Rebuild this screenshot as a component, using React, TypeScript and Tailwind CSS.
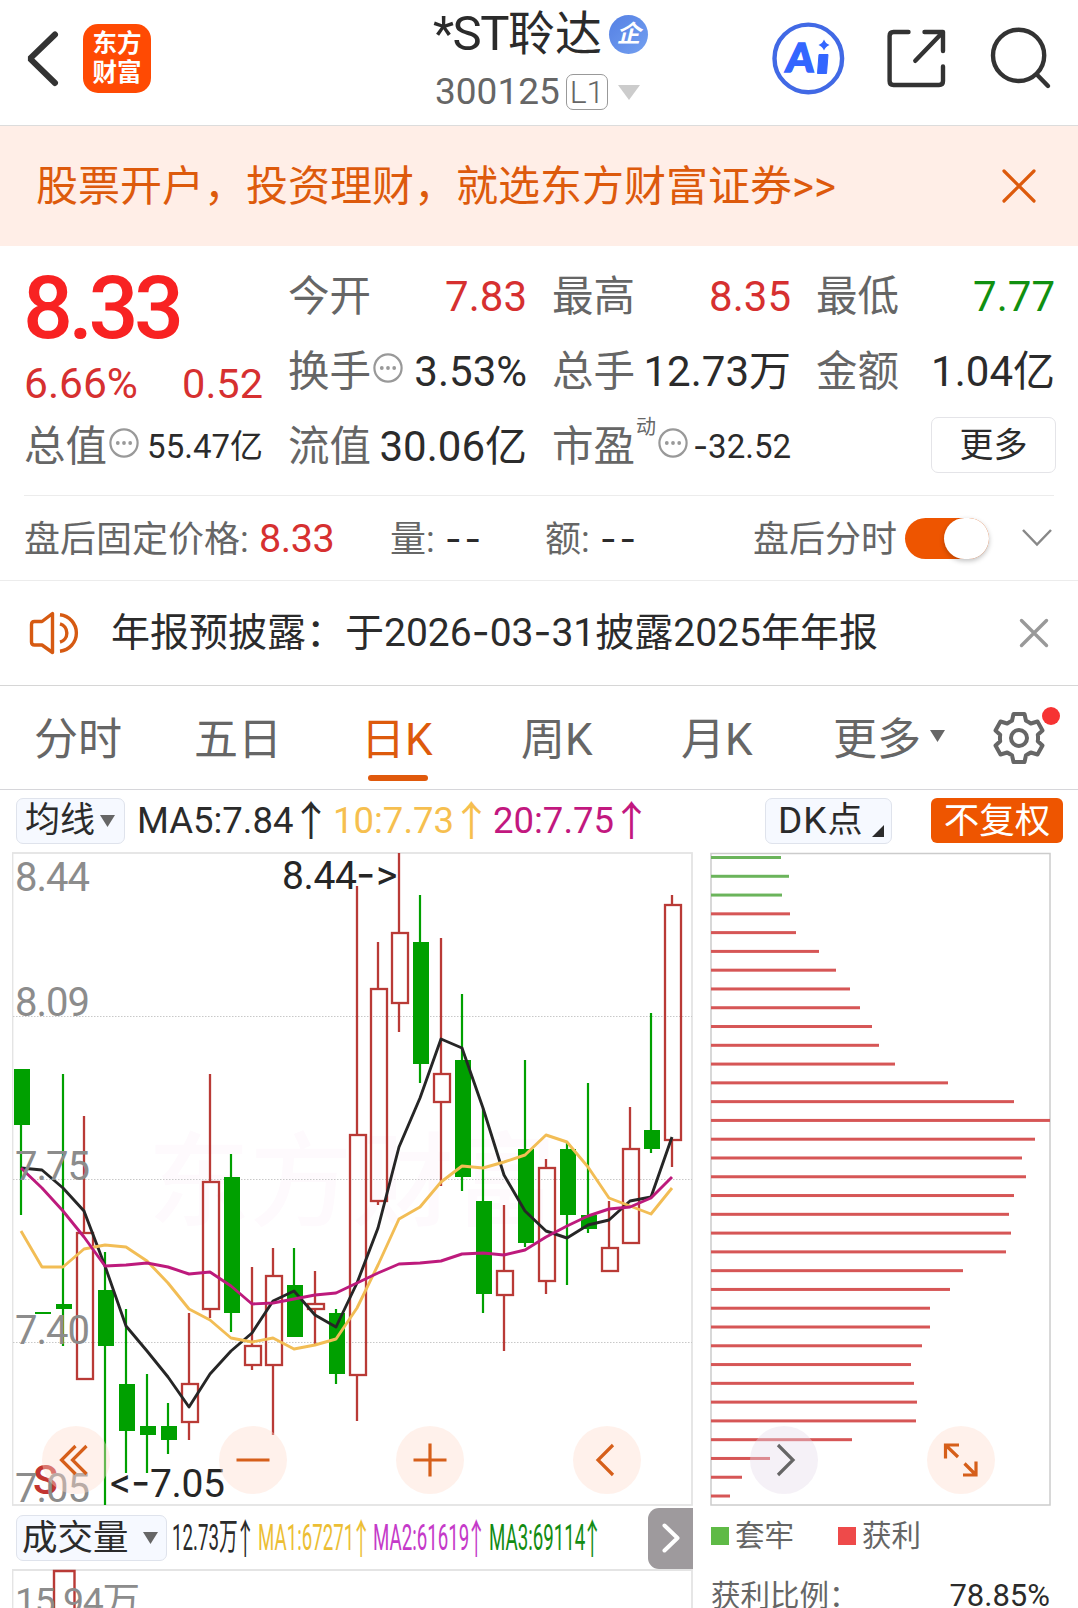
import React from 'react';
import clsx from 'clsx';

type Candle = {
  up: boolean;
  high: number;
  low: number;
  top: number;
  bottom: number;
};

const c = (up: boolean, high: number, top: number, bottom: number, low: number): Candle => ({ up, high, top, bottom, low });

// Daily candles, already scaled to chart units
const candles: Candle[] = [
  c(false, 1069, 1069, 1125, 1215),
  c(false, 1312, 1312, 1314, 1314),
  c(false, 1074, 1304, 1309, 1346),
  c(true, 1116, 1233, 1379, 1379),
  c(false, 1252, 1290, 1346, 1505),
  c(false, 1309, 1384, 1431, 1473),
  c(false, 1374, 1426, 1435, 1473),
  c(false, 1403, 1426, 1440, 1454),
  c(true, 1313, 1384, 1422, 1440),
  c(true, 1074, 1182, 1309, 1318),
  c(false, 1154, 1177, 1313, 1332),
  c(true, 1267, 1346, 1365, 1370),
  c(true, 1248, 1276, 1365, 1435),
  c(false, 1248, 1285, 1337, 1337),
  c(true, 1271, 1304, 1309, 1345),
  c(false, 1309, 1313, 1374, 1384),
  c(true, 886, 1135, 1375, 1421),
  c(true, 942, 989, 1201, 1205),
  c(true, 853, 933, 1003, 1032),
  c(false, 895, 942, 1064, 1083),
  c(true, 938, 1074, 1102, 1186),
  c(false, 994, 1060, 1177, 1191),
  c(false, 1108, 1201, 1294, 1313),
  c(true, 1205, 1271, 1295, 1351),
  c(false, 1060, 1149, 1243, 1247),
  c(true, 1159, 1168, 1281, 1294),
  c(false, 1143, 1149, 1215, 1285),
  c(false, 1083, 1215, 1229, 1233),
  c(true, 1201, 1248, 1271, 1271),
  c(true, 1107, 1149, 1243, 1243),
  c(false, 1013, 1130, 1149, 1153),
  c(true, 895, 905, 1140, 1167),
];

const ma5 = [1168, 1170, 1188, 1211, 1266, 1326, 1351, 1377, 1407, 1374, 1351, 1333, 1301, 1291, 1315, 1327, 1283, 1228, 1147, 1098, 1039, 1048, 1108, 1175, 1211, 1231, 1238, 1225, 1220, 1201, 1197, 1137];
const ma10 = [1231, 1267, 1267, 1249, 1245, 1247, 1261, 1283, 1309, 1320, 1338, 1342, 1338, 1349, 1345, 1339, 1308, 1265, 1219, 1207, 1182, 1166, 1168, 1162, 1155, 1135, 1142, 1167, 1198, 1206, 1214, 1188];
const ma20 = [1168, 1188, 1211, 1237, 1266, 1265, 1263, 1267, 1274, 1272, 1286, 1304, 1303, 1299, 1295, 1293, 1283, 1273, 1264, 1263, 1261, 1254, 1253, 1255, 1250, 1237, 1226, 1216, 1209, 1207, 1198, 1177];

const chips = [70, 78, 71, 79, 85, 108, 125, 139, 149, 161, 168, 184, 237, 303, 339, 324, 311, 315, 303, 298, 300, 295, 252, 239, 219, 219, 211, 200, 203, 206, 205, 141, 59, 31, 19];

const candleX = (i: number) => 21 + i * 21;
const toPoints = (values: number[]) => values.map((y, i) => `${candleX(i)},${y}`).join(' ');

const Dash: React.FC = () => <span className="font-['Inter']">-</span>;

const Arrow: React.FC<{ className?: string }> = ({ className }) => (
  <span className={clsx("font-['Noto_Sans_CJK_SC']", className)}>↑</span>
);

const InfoDot: React.FC<{ className?: string }> = ({ className }) => (
  <svg className={clsx('w-[30px] h-[30px] shrink-0', className)} viewBox="0 0 30 30" fill="#999">
    <circle cx="15" cy="15" r="13.6" fill="none" stroke="#999" strokeWidth="2.2" />
    <circle cx="8.8" cy="15" r="1.9" />
    <circle cx="15" cy="15" r="1.9" />
    <circle cx="21.2" cy="15" r="1.9" />
  </svg>
);

const Caret: React.FC<{ className?: string }> = ({ className }) => (
  <svg className={className} width="15" height="12" viewBox="0 0 15 12">
    <path d="M0 0H15L7.5 12Z" fill="#666" />
  </svg>
);

const Header: React.FC = () => (
  <header className="flex h-[126px] border-b border-[#dcdcdc]">
    <div className="flex w-[433px] pl-[26px] pt-[24px]">
      <svg className="mt-[6px]" width="34" height="58" viewBox="26 30 34 58" fill="none" stroke="#333" strokeWidth="6" strokeLinecap="round">
        <path d="M55 34.5L30 58.7L55 83" strokeLinejoin="bevel" />
      </svg>
      <div className="ml-[23px] flex h-[69px] w-[68px] flex-col items-center justify-center rounded-[15px] bg-[#ff4a03] pb-px text-[24.5px] font-bold leading-[29px] text-white">
        <span>东方</span>
        <span>财富</span>
      </div>
    </div>

    <div className="w-[340px]">
      <div className="mt-[4px] flex h-[60px] items-center text-[47px] leading-[60px] text-[#2b2b2b]">
        <span className="w-[75px] whitespace-nowrap text-[49px] tracking-[-1.5px]">*ST</span>
        <span>聆达</span>
        <span className="ml-[7px] flex h-[39px] w-[39px] items-center justify-center rounded-full bg-gradient-to-br from-[#5580e4] to-[#74a0f0] text-[24px] font-bold italic leading-none text-white">企</span>
      </div>
      <div className="flex h-[56px] items-center pl-[2px] text-[#666]">
        <span className="w-[131px] text-[37px] leading-[40px]">300125</span>
        <span className="flex h-[36px] w-[42px] items-center justify-center rounded-[7px] border-[1.5px] border-[#999] text-[32px] font-light leading-[36px]">L1</span>
        <svg className="ml-[10px]" width="22" height="15" viewBox="0 0 22 15">
          <path d="M0 0H22L11 15Z" fill="#ccc" />
        </svg>
      </div>
    </div>

    <div className="-ml-[3px] flex flex-1 pt-[20px]">
      <svg width="76" height="76" viewBox="770 20 76 76">
        <circle cx="808.3" cy="58.4" r="33.8" fill="#fff" stroke="#4169e5" strokeWidth="4.4" />
        <text x="0" y="0" transform="translate(785 71.5) skewX(-5)" fontSize="40" fontWeight="900" fill="#3366ff" stroke="#3366ff" strokeWidth="1.5" fontFamily="Lato" textLength="28">A</text>
        <path d="M819 54.5H828L826.5 73.5H817.5Z" fill="#3366ff" stroke="#3366ff" strokeLinejoin="round" />
        <path d="M824 39.5Q825.5 43.5 829.5 45Q825.5 46.5 824 50.5Q822.5 46.5 818.5 45Q822.5 43.5 824 39.5Z" fill="#3366ff" />
      </svg>
      <svg className="ml-[40px]" width="62" height="76" viewBox="886 20 62 76" fill="none" stroke="#333" strokeWidth="4.4" strokeLinecap="round" strokeLinejoin="round">
        <path d="M908.5 32H893.5Q889.6 32 889.6 36V81Q889.6 85 893.5 85H939Q943 85 943 81V66.5" />
        <path d="M924.5 32H943V51M943 32L915.3 60.8" />
      </svg>
      <svg className="ml-[41px]" width="66" height="76" viewBox="989 20 66 76" fill="none" stroke="#333" strokeWidth="4.4" strokeLinecap="round">
        <circle cx="1018.6" cy="55.4" r="25.6" />
        <path d="M1036.8 74.5L1048 86" />
      </svg>
    </div>
  </header>
);

const Stat: React.FC<{ label: string; value: React.ReactNode; info?: boolean; tone?: string; sup?: string; small?: boolean }> = ({ label, value, info, tone, sup, small }) => (
  <div className="flex items-center justify-between whitespace-nowrap">
    <span className="-ml-px flex items-center text-[#666]">
      {label}
      {sup && <span className="ml-[1px] -mt-[40px] text-[20px] leading-[20px]">{sup}</span>}
      {info && <InfoDot className="-mt-[8px] ml-[2px]" />}
    </span>
    <span className={clsx(tone ?? 'text-[#2b2b2b]', small ? 'text-[33px]' : 'text-[42px]')}>{value}</span>
  </div>
);

const Quote: React.FC = () => (
  <section className="h-[249px] pl-[25px] pt-[13px]">
    <div className="grid grid-cols-[238px_238px_238px_238px] grid-rows-[75px_75px_75px] gap-x-[26px] text-[41.5px] leading-[75px]">
      <div className="row-span-2 text-[#d63030]">
        <div className="-ml-[2px] h-[98px] text-[88px] font-medium leading-[98px] tracking-[-4.5px] text-[#f82222]">8.33</div>
        <div className="flex h-[54px] justify-between leading-[54px]">
          <span className="-ml-px text-[42.5px]">6.66%</span>
          <span>0.52</span>
        </div>
      </div>
      <Stat label="今开" value="7.83" tone="text-[#d63030]" />
      <Stat label="最高" value="8.35" tone="text-[#d63030]" />
      <Stat label="最低" value="7.77" tone="text-[#109010]" />
      <Stat label="换手" value="3.53%" info />
      <Stat label="总手" value="12.73万" />
      <Stat label="金额" value="1.04亿" />
      <Stat label="总值" value="55.47亿" info small />
      <Stat label="流值" value="30.06亿" />
      <Stat label="市盈" sup="动" value={<><Dash />32.52</>} info small />
      <div className="flex justify-end pt-[8px]">
        <button className="-mr-px h-[56px] w-[125px] rounded-[7px] border border-[#e4e4e8] text-[34px] leading-[52px] text-[#2b2b2b]">更多</button>
      </div>
    </div>
  </section>
);

const AfterHours: React.FC = () => (
  <section className="border-b border-[#ececec]">
    <div className="mx-[24px] border-t border-[#ececec]" />
    <div className="flex h-[84px] items-center pl-[24px] text-[36px] leading-[84px] text-[#666]">
      <span className="w-[235px] pt-[3px]">盘后固定价格:</span>
      <span className="w-[131px] pt-[2px] text-[39.5px] tracking-[-0.4px] text-[#d63030]">8.33</span>
      <span className="w-[55px] pt-[3px]">量:</span>
      <span className="w-[100px] pt-[3px] tracking-[3px] text-[#2b2b2b]"><Dash /><Dash /></span>
      <span className="w-[55px] pt-[3px]">额:</span>
      <span className="w-[153px] pt-[3px] tracking-[3px] text-[#2b2b2b]"><Dash /><Dash /></span>
      <span className="w-[152px] pt-[3px]">盘后分时</span>
      <span className="flex h-[41px] w-[84px] justify-end rounded-full bg-[#ee5500]">
        <span className="h-[41px] w-[45px] rounded-full bg-white shadow-[0_2px_5px_rgba(0,0,0,0.25)]" />
      </span>
      <svg className="ml-[32px]" width="32" height="20" viewBox="0 0 32 20" fill="none" stroke="#888" strokeWidth="2.5">
        <path d="M2 2L16 16.5L30 2" />
      </svg>
    </div>
  </section>
);

const Notice: React.FC = () => (
  <section className="flex h-[105px] items-center border-b border-[#d6d6d6] pl-[29px] text-[39px] text-[#2b2b2b]">
    <svg width="52" height="46" viewBox="29 609 52 46" fill="none" stroke="#d65a12" strokeWidth="3.4" strokeLinejoin="round">
      <path d="M52.5 612.5V651.5L42 644H34.5Q31.5 644 31.5 641V623.5Q31.5 620.5 34.5 620.5H42Z" />
      <path d="M60 622.8A9.6 9.6 0 0 1 60 641.2M60 613.8A18.3 18.3 0 0 1 60 650.2" />
    </svg>
    <span className="ml-[30px] w-[908px] whitespace-nowrap pb-px">年报预披露：于2026<Dash />03<Dash />31披露2025年年报</span>
    <svg width="30" height="30" viewBox="0 0 30 30" stroke="#999" strokeWidth="3.4" strokeLinecap="round">
      <path d="M2.5 2.5L27.5 27.5M27.5 2.5L2.5 27.5" />
    </svg>
  </section>
);

const Tabs: React.FC = () => (
  <nav className="flex h-[104px] border-b border-[#d6d6da] pl-[34px] text-[44px] leading-[108px] text-[#666]">
    <span className="w-[160px]">分时</span>
    <span className="w-[167px]">五日</span>
    <span className="flex w-[160px] flex-col text-[#dd5a0c]">
      <span className="h-[89px]">日K</span>
      <span className="ml-[7px] h-[6px] w-[60px] rounded-full bg-[#e0590c]" />
    </span>
    <span className="w-[160px]">周K</span>
    <span className="w-[152px]">月K</span>
    <span className="flex w-[159px]">更多<Caret className="ml-[9px] mt-[44px]" /></span>
    <span className="relative flex items-center">
      <svg width="54" height="54" viewBox="-27 -27 54 54" fill="none" stroke="#666" strokeWidth="4" strokeLinejoin="round">
        <path d="M-5.5 -24H5.5L7 -17.2Q9.5 -16 11.8 -14.5L18.5 -16.5L23.5 -7.5L18.8 -3.2Q19.3 0 18.8 3.2L23.5 7.5L18.5 16.5L11.8 14.5Q9.5 16 7 17.2L5.5 24H-5.5L-7 17.2Q-9.5 16 -11.8 14.5L-18.5 16.5L-23.5 7.5L-18.8 3.2Q-19.3 0 -18.8 -3.2L-23.5 -7.5L-18.5 -16.5L-11.8 -14.5Q-9.5 -16 -7 -17.2Z" />
        <circle r="8" />
      </svg>
      <span className="absolute -right-[14px] top-[21px] h-[18px] w-[18px] rounded-full bg-[#f63333]" />
    </span>
  </nav>
);

const IndicatorBar: React.FC = () => (
  <div className="flex h-[62px] items-center pl-[16px] pb-px text-[36.5px] leading-[50px] text-[#2b2b2b]">
    <span className="flex h-[46px] w-[109px] items-center rounded-[7px] border border-[#dfe3ec] bg-[#f6f9ff] pl-[8px] text-[35px]">
      均线<Caret className="ml-[5px]" />
    </span>
    <span className="ml-[12px] flex w-[196px]">MA5:7.84<Arrow className="-ml-[3px] -mt-[3px] text-[41px]" /></span>
    <span className="flex w-[160px] text-[#f6bf4f]">10:7.73<Arrow className="-ml-[3px] -mt-[3px] text-[41px]" /></span>
    <span className="flex w-[272px] text-[#c2187f]">20:7.75<Arrow className="-ml-[3px] -mt-[3px] text-[41px]" /></span>
    <span className="flex h-[46px] w-[127px] items-center rounded-[7px] border border-[#dfe3ec] bg-[#f6f9ff] pl-[12px] text-[35px]">
      <span className="text-[37px] tracking-[1px]">DK</span>点
      <svg className="ml-[9px] mt-[20px]" width="12" height="12" viewBox="0 0 12 12">
        <path d="M12 0V12H0Z" fill="#2b2b2b" />
      </svg>
    </span>
    <span className="ml-[39px] flex h-[45px] w-[132px] items-center justify-center rounded-[6px] bg-[#ee5500] text-[35.5px] text-white">不复权</span>
  </div>
);

const KLineChart: React.FC = () => (
  <svg className="shrink-0" width="682" height="655" viewBox="12 852 682 655" fontFamily="Roboto, 'Noto Sans CJK SC', sans-serif">
    <rect x="12.5" y="853" width="679.5" height="652" fill="#fff" stroke="#e4e4e4" strokeWidth="1.8" />
    <text x="148" y="1218" fontSize="102" fill="#fefafd" fontWeight="500">东方财富</text>
    {[1016.5, 1179.5, 1342.5].map((y) => (
      <line key={y} x1="13" x2="692" y1={y} y2={y} stroke="#c8c8c8" strokeDasharray="1.5 1.5" />
    ))}
    {candles.map((k, i) => {
      const x = candleX(i);
      return k.up ? (
        <g key={i} stroke="#b93a36" strokeWidth="2.3" fill="none">
          <path d={`M${x} ${k.high}V${k.top}M${x} ${k.bottom}V${k.low}`} />
          <rect x={x - 7} y={k.top} width="16" height={k.bottom - k.top} />
        </g>
      ) : (
        <g key={i} fill="#00a000">
          <rect x={x - 1.1} y={k.high} width="2.2" height={k.low - k.high} />
          <rect x={x - 7} y={k.top} width="16" height={k.bottom - k.top} />
        </g>
      );
    })}
    <g fill="none" strokeWidth="2.9" strokeLinejoin="round">
      <polyline points={toPoints(ma5)} stroke="#262626" />
      <polyline points={toPoints(ma10)} stroke="#f2bd55" />
      <polyline points={toPoints(ma20)} stroke="#bd1a7c" />
    </g>
    <text x="33" y="1494" fontSize="41" fontWeight="500" fill="#c23531">S</text>
    <g fontSize="40" fill="#8c8c8c">
      <text x="15" y="891" textLength="75">8.44</text>
      <text x="15" y="1015.5" textLength="75">8.09</text>
      <text x="15" y="1180" textLength="75">7.75</text>
      <text x="15" y="1343.5" textLength="75">7.40</text>
      <text x="15" y="1501.5" textLength="75">7.05</text>
    </g>
    <g fontSize="39" fill="#262626">
      <text x="282" y="889" textLength="75">8.44</text>
      <text x="356" y="889" fontFamily="Inter" fontSize="42">-</text>
      <text x="376" y="889" fontSize="41">&gt;</text>
      <text x="110" y="1496.5" fontSize="41">&lt;</text>
      <text x="131" y="1496.5" fontFamily="Inter" fontSize="42">-</text>
      <text x="150" y="1496.5" textLength="75">7.05</text>
    </g>
  </svg>
);

const ChipChart: React.FC = () => (
  <svg className="ml-[16px] shrink-0" width="342" height="655" viewBox="710 852 342 655">
    <rect x="711" y="853.5" width="339" height="651.5" fill="#fff" stroke="#ccc" strokeWidth="1.5" />
    {chips.map((w, i) => (
      <rect key={i} x="711" y={856 + i * 18.78} width={w} height="3" fill={i < 3 ? '#6bb45b' : '#d65656'} />
    ))}
  </svg>
);

const controls = [
  <path d="M76 1445.5L62 1459.5L76 1473.5M87 1445.5L73 1459.5L87 1473.5" transform="translate(-76.5 -1459.5)" />,
  <path d="M-16.5 0H16.5" />,
  <path d="M-16.5 0H16.5M0 -16.5V16.5" />,
  <path d="M6 -15L-9 0L6 15" />,
  <path d="M-6 -15L9 0L-6 15" />,
  <path d="M-15.5 -1.5V-15H-2M-15.5 -15L-3 -3M2 15H15V1.5M15 15L3.5 3.5" />,
];

const ChartControls: React.FC = () => (
  <div className="absolute bottom-[13px] left-[42px] flex gap-[109px]">
    {controls.map((icon, i) => (
      <span key={i} className={clsx('h-[68px] w-[68px] rounded-full', i === 4 ? 'bg-[#e6dcea]/40' : 'bg-[#ffdccd]/40')}>
        <svg width="68" height="68" viewBox="-34 -34 68 68" fill="none" stroke={i === 4 ? '#666' : '#d65f1a'} strokeWidth="3.2">
          {icon}
        </svg>
      </span>
    ))}
  </div>
);

// The volume legend is squeezed horizontally so all four values fit one line
const volumeLegend = [
  { text: '12.73万', box: 'w-[63px]', color: 'text-[#2b2b2b]' },
  { text: 'MA1:67271', box: 'w-[93px]', color: 'text-[#ecbe34]' },
  { text: 'MA2:61619', box: 'w-[93px]', color: 'text-[#c53ac9]' },
  { text: 'MA3:69114', box: 'w-[93px]', color: 'text-[#138c13]' },
];

const VolumeBar: React.FC = () => (
  <div className="flex h-[62px] w-[681px] items-center text-[37px] text-[#2b2b2b]">
    <span className="ml-[4px] flex h-[46px] w-[151px] shrink-0 items-center rounded-[7px] border border-[#dfe3ec] bg-[#f6f9ff] pl-[5px] text-[35.5px] leading-[46px]">
      成交量<Caret className="ml-[14px]" />
    </span>
    <span className="ml-[5px] flex h-[46px] w-[476px] shrink-0 leading-[46px]">
      {volumeLegend.map((item) => (
        <span key={item.text} className={clsx('flex whitespace-nowrap', item.color)}>
          <span className={item.box}>
            <span className="inline-block origin-left scale-x-[0.505]">{item.text}</span>
          </span>
          <span className="-mt-[2px] w-[22.5px]">
            <span className="inline-block origin-left scale-x-[0.5]"><Arrow className="text-[41px]" /></span>
          </span>
        </span>
      ))}
    </span>
    <span className="flex h-[61px] w-[45px] shrink-0 items-center justify-center rounded-l-[11px] bg-[#9e9a9d]">
      <svg width="18" height="30" viewBox="0 0 18 30" fill="none" stroke="#fff" strokeWidth="4" strokeLinecap="round" strokeLinejoin="round">
        <path d="M2.5 2.5L15.5 15L2.5 27.5" />
      </svg>
    </span>
  </div>
);

const App: React.FC = () => (
  <div className="h-[1608px] w-[1078px] overflow-hidden bg-white font-['Roboto','Noto_Sans_CJK_SC',sans-serif]">
    <Header />

    <section className="flex h-[120px] items-center bg-[#ffeee7] pl-[36px] text-[42px] text-[#dd5a0c]">
      <span className="w-[965px] whitespace-nowrap">股票开户，投资理财，就选东方财富证券&gt;&gt;</span>
      <svg width="36" height="36" viewBox="0 0 36 36" stroke="#dd5a0c" strokeWidth="3.2" strokeLinecap="round">
        <path d="M3 3L33 33M33 3L3 33" />
      </svg>
    </section>

    <Quote />
    <AfterHours />
    <Notice />
    <Tabs />
    <IndicatorBar />

    <div className="relative flex pl-[12px]">
      <KLineChart />
      <ChipChart />
      <ChartControls />
    </div>

    <div className="flex pl-[12px]">
      <div>
        <VolumeBar />
        <svg width="682" height="40" viewBox="12 1568 682 40" fontFamily="Roboto, 'Noto Sans CJK SC', sans-serif">
          <path d="M12.5 1608V1569H692V1608" fill="none" stroke="#e4e4e4" strokeWidth="1.8" />
          <path d="M54 1608V1570H74.5V1608" fill="none" stroke="#b93a36" strokeWidth="2.4" />
          <text x="15" y="1612.5" fontSize="37.5" fill="#8c8c8c" textLength="125">15.94万</text>
        </svg>
      </div>
      <div className="-mt-px ml-[17px] w-[339px] text-[29.5px] text-[#666]">
        <div className="flex h-[60px] items-center leading-[60px]">
          <span className="h-[18px] w-[18px] bg-[#5fba46]" />
          <span className="ml-[6px]">套牢</span>
          <span className="ml-[44px] h-[18px] w-[18px] bg-[#ee4a4a]" />
          <span className="ml-[6px]">获利</span>
        </div>
        <div className="flex h-[59px] items-center justify-between leading-[58px]">
          <span>获利比例：</span>
          <span className="text-[31px] text-[#2b2b2b]">78.85%</span>
        </div>
      </div>
    </div>
  </div>
);

export default App;
